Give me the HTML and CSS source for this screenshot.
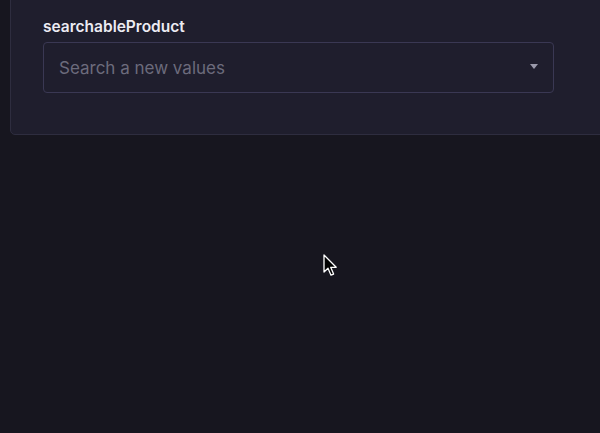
FILE: index.html
```html
<!DOCTYPE html>
<html>
<head>
<meta charset="utf-8">
<link rel="stylesheet" href="styles.css">
</head>
<body>
<div class="card">
  <label class="label">searchableProduct</label>
  <div class="select">
    <span class="placeholder">Search a new values</span>
    <span class="caret"></span>
  </div>
</div>
<svg class="cursor" width="15" height="24" viewBox="0 0 15 24">
  <path d="M1 1 L1 18 L5 14.2 L8 21.2 L10.6 20.1 L7.7 13.3 L13.2 13.3 Z" fill="#000" stroke="#fff" stroke-width="1.3" stroke-linejoin="round"/>
</svg>
</body>
</html>
```
FILE: styles.css
```css
html, body {
  margin: 0;
  padding: 0;
  background: #17161f;
  height: 100%;
  overflow: hidden;
  font-family: Inter, "Liberation Sans", sans-serif;
}
.card {
  margin: -20px -20px 0 10px;
  padding: 36px 65px 41px 32px;
  background: #1f1e2d;
  border: 1px solid #2e2d3f;
  border-radius: 5px;
  display: flex;
  flex-direction: column;
  gap: 6px;
}
.label {
  color: #ecebf2;
  font-size: 15.5px;
  font-weight: 600;
  line-height: 19px;
}
.select {
  height: 49px;
  border: 1px solid #3a3853;
  border-radius: 4px;
  display: flex;
  align-items: center;
  justify-content: space-between;
  padding: 0 15px 0 15px;
}
.placeholder {
  color: #6c6b7c;
  font-size: 17px;
  margin-top: 1px;
}
.caret {
  width: 0;
  height: 0;
  border-left: 4.5px solid transparent;
  border-right: 4.5px solid transparent;
  border-top: 5px solid #9b9aab;
  margin-top: -3px;
}
.cursor {
  position: absolute;
  left: 323px;
  top: 254px;
}
```
